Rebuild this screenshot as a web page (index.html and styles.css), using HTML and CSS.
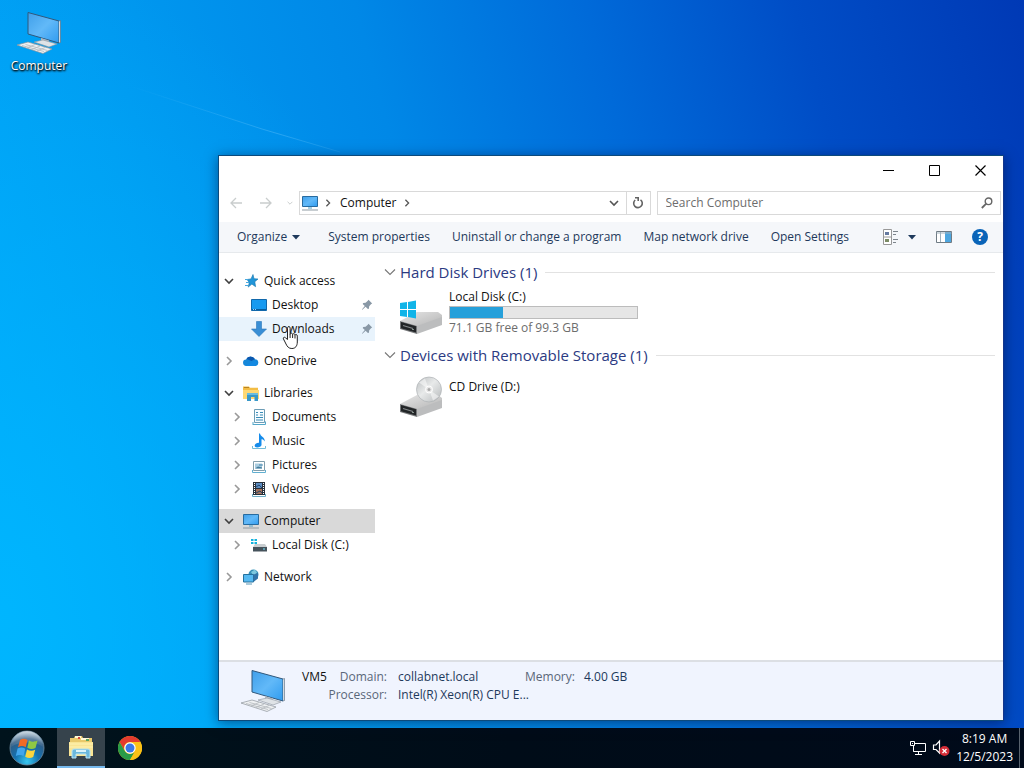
FILE: index.html
```
<!DOCTYPE html>
<html lang="en">
<head>
<meta charset="utf-8">
<meta name="viewport" content="width=device-width, initial-scale=1">
<title>Computer</title>
<link rel="stylesheet" href="styles.css">
</head>
<body>
<svg class="defs" aria-hidden="true">
  <defs>
    <linearGradient id="screen" x1="0" y1="0" x2="1" y2="1"><stop offset="0" stop-color="#3f9fea"/><stop offset=".5" stop-color="#62b9f8"/><stop offset="1" stop-color="#2f9bf0"/></linearGradient>
    <linearGradient id="metal" x1="0" y1="0" x2="1" y2="1"><stop offset="0" stop-color="#e6e6e6"/><stop offset="1" stop-color="#b4b4b4"/></linearGradient>
    <linearGradient id="disc" x1="0" y1="0" x2="1" y2="1"><stop offset="0" stop-color="#b9bcbe"/><stop offset=".45" stop-color="#e8eaea"/><stop offset="1" stop-color="#b5b8ba"/></linearGradient>
    <radialGradient id="orb" cx=".5" cy=".9" r=".9"><stop offset="0" stop-color="#39c8f0"/><stop offset=".4" stop-color="#1471b0"/><stop offset=".75" stop-color="#315c83"/><stop offset="1" stop-color="#b5cad8"/></radialGradient>
    <linearGradient id="shine" x1="0" y1="0" x2="0" y2="1"><stop offset="0" stop-color="#fff" stop-opacity=".8"/><stop offset="1" stop-color="#fff" stop-opacity=".1"/></linearGradient>
    <linearGradient id="ray" x1="0" y1="0" x2="1" y2="0"><stop offset="0" stop-color="#8ad4ff" stop-opacity="0"/><stop offset=".7" stop-color="#8ad4ff" stop-opacity=".3"/><stop offset="1" stop-color="#8ad4ff" stop-opacity=".12"/></linearGradient>
    <symbol id="pc-big" viewBox="0 0 46 46">
      <path d="M12 1.500 43 10v22L12 23Z" fill="url(#screen)" stroke="#31587c" stroke-width="1"/>
      <path d="M43 10l1.500-.5v22L43 32" fill="#d3d9df" stroke="#54697d" stroke-width=".6"/>
      <path d="M25 27v4l8 3v-4.500Z" fill="#b6bdc5"/>
      <path d="m18 31 9-2 14 4-8 3Z" fill="#dfe3e7" stroke="#8b949c" stroke-width=".6"/>
      <path d="m1 34 11-3 24 7-9 4.500Z" fill="#eef0f2" stroke="#8c949b" stroke-width=".7"/>
      <path d="m6 34.500 22 6M9.500 33.500l22 6M11 37l8-3.500M16 38.500l8-3.500M21 40l8-3.500" stroke="#b3b8bd" stroke-width=".8" fill="none"/>
    </symbol>
    <symbol id="pc" viewBox="0 0 16 16">
      <path d="M.5 1.500h15v10H.5z" fill="url(#screen)" stroke="#286b9f"/>
      <path d="M6 13h4" stroke="#4ea1c7"/><path d="M0 15h16" stroke="#8f9ba4"/>
    </symbol>
    <symbol id="down" viewBox="0 0 10 10"><path d="m1 3 4 4 4-4" fill="none" stroke="currentColor" stroke-width="1.600"/></symbol>
    <symbol id="down-thin" viewBox="0 0 12 12"><path d="m1 3.500 5 5 5-5" fill="none" stroke="currentColor" stroke-width="1.100"/></symbol>
    <symbol id="right" viewBox="0 0 10 10"><path d="m3 1 4 4-4 4" fill="none" stroke="currentColor" stroke-width="1.600"/></symbol>
    <symbol id="fill-down" viewBox="0 0 8 5"><path d="M0 0h8L4 4.500z" fill="currentColor"/></symbol>
    <symbol id="arrow-left" viewBox="0 0 12 12"><path d="M12 6H1M6 1 1 6l5 5" fill="none" stroke="currentColor" stroke-width="1.300"/></symbol>
    <symbol id="arrow-right" viewBox="0 0 12 12"><path d="M0 6h11M6 1l5 5-5 5" fill="none" stroke="currentColor" stroke-width="1.300"/></symbol>
    <symbol id="pin" viewBox="0 0 12 12"><path d="m7.500.8 3.700 3.700-1 .6-2 2.200-.3 2.400-1 .4-2.300-2.300-3.500 3.300.2-1 2.500-3.100L1.700 5l.5-.9 2.400-.4 2.200-2z" fill="#8998a6"/></symbol>
    <symbol id="star" viewBox="0 0 16 16"><path d="m10 1.500 1 4.200 4 .3-3.200 2.700.8 5-3.700-2.600-3.700 3 1.100-4.600L4 6.500l4-.6z" fill="#2095d8" stroke="#1374ad" stroke-width=".6"/><path d="M2 6.500h3M3 9.500h3M2 12.500h3" stroke="#49a9df"/></symbol>
    <symbol id="desk" viewBox="0 0 16 16"><path d="M.5 2.500h15v11H.5z" fill="#189af0" stroke="#1168ab"/><path d="M1 12.500h14" stroke="#075d9e"/><path d="M2 12.500h1m1 0h1" stroke="#9cd5ff"/></symbol>
    <symbol id="download" viewBox="0 0 16 16"><path d="M5.500.5h5V8h5L8 15.500.5 8h5z" fill="#398ed5" stroke="#2876b8" stroke-width=".6"/></symbol>
    <symbol id="cloud" viewBox="0 0 16 16"><path d="M3.500 13a3.300 3.300 0 0 1-.3-6.600A5 5 0 0 1 12 6.300a3.400 3.400 0 0 1 .7 6.700z" fill="#1687d9"/><path d="M3 6.500A5 5 0 0 1 12 6L8.500 8 4.300 6.300z" fill="#0a57ae"/><path d="M2.500 12.800 12 7.600a3.400 3.400 0 0 1 .7 5.400H3.500z" fill="#1389e3"/></symbol>
    <symbol id="folder" viewBox="0 0 16 16"><path d="M0 1.500h6l1 1.300h8v11H0z" fill="#f3bd45"/><path d="M0 5h16v9H0z" fill="#ffd873"/><path d="M1 2.500h5" stroke="#b98325"/><path d="M4 8h11v8h-3.500v-4H8v4H4z" fill="#3998c8"/><path d="M4 8h11v2H4z" fill="#69bce0"/></symbol>
    <symbol id="doc" viewBox="0 0 16 16"><path d="M3.500.5h10v13h-10z" fill="#f7fcff" stroke="#6d9db6"/><path d="M5 3.500h2M9 3.500h3M5 6h2m2 0h3M5 8.500h7M5 11h7" stroke="#388bb6"/><path d="M1.500 15.500h13v-3" fill="none" stroke="#53a7c9"/><path d="M2 13v2" stroke="#53a7c9"/></symbol>
    <symbol id="music" viewBox="0 0 16 16"><path d="M9 .5c.4 3 5 3.500 4.800 8-1-1.600-2.200-2.200-3.300-2.200v5.700c0 2.400-6.800 3.800-6.800.8C3.700 10.400 6.500 9.600 8 9.800V.5z" fill="#168ceb"/><path d="M1.500 13v2.500h13V13" fill="none" stroke="#73bcd8"/></symbol>
    <symbol id="pic" viewBox="0 0 16 16"><path d="M2.500 4.500h11v9h-11z" fill="#fff" stroke="#819eac"/><path d="M4 6.500h7v5H4z" fill="#a9ccdf"/><path d="m4 11.500 3-2 4 1v1z" fill="#417b9c"/><path d="M8 8h4" stroke="#4686ad"/><path d="M1.500 13v2.500h13V13" fill="none" stroke="#62afd0"/></symbol>
    <symbol id="video" viewBox="0 0 16 16"><path d="M2 1h12v13H2z" fill="#27313b"/><path d="M5 2h6v5H5z" fill="#5b8bc0"/><path d="M5 8h6v5H5z" fill="#a3715b"/><path d="m5 6 3-2 3 3M5 12l4-2 2 2" stroke="#24486c" fill="none"/><path d="M3.500 2v11M12.500 2v11" stroke="#fff" stroke-width="1" stroke-dasharray="1 1"/><path d="M1.500 13v2.500h13V13" fill="none" stroke="#6cadc5"/></symbol>
    <symbol id="disk" viewBox="0 0 16 16"><path d="M0 2h2.500v2H0zm3.500 0H6v2H3.500zM0 5h2.500v2H0zm3.500 0H6v2H3.500z" fill="#14b3dd"/><path d="m2 10 2-3h10l2 3z" fill="#c9ced1"/><path d="M2 10h14v4.500H2z" fill="#46535c"/><path d="M12 12h2" stroke="#75e8ff"/></symbol>
    <symbol id="net" viewBox="0 0 16 16"><circle cx="10.500" cy="5.500" r="5" fill="#358fb6"/><path d="m8 3 4-2.500 2 3-3 4" fill="#7dc8df"/><path d="M.5 5.500h10v7.500H.5z" fill="#56b9f1" stroke="#25719d"/><path d="M10.500 5.500 15 4v5.500L10.500 13" fill="#3273a8"/><path d="M3 15h6" stroke="#5896b5"/></symbol>
    <symbol id="drive-body" viewBox="0 0 42 22"><path d="M0 9 17 0h21l4 3v3L17 15z" fill="url(#metal)"/><path d="m0 9 17 5v8L0 17z" fill="#77797b"/><path d="m17 14 25-9v8l-25 9z" fill="#bcbdbe"/><path d="m1 10 15 4.300v6.200L1 16.300z" fill="#222527"/><path d="m3 13.500 10 3" stroke="#85898b" stroke-width="1.300"/><path d="M13 17v1" stroke="#e7fff0"/></symbol>
  </defs>
</svg>

<main class="desktop">
  <svg class="streak" viewBox="0 0 1024 728" preserveAspectRatio="none" aria-hidden="true"><path d="M130 86 262 129 340 152" fill="none" stroke="url(#ray)"/></svg>
  <button class="shortcut" type="button"><svg class="i46"><use href="#pc-big"/></svg><span>Computer</span></button>

  <section class="window" aria-label="Computer">
    <header class="titlebar">
      <button type="button" aria-label="Minimize"><svg class="i11" viewBox="0 0 11 11"><path d="M0 5.500h11" stroke="#000"/></svg></button>
      <button type="button" aria-label="Maximize"><svg class="i11" viewBox="0 0 11 11"><path d="M.5.5h10v10H.5z" fill="none" stroke="#000"/></svg></button>
      <button type="button" aria-label="Close"><svg class="i11" viewBox="0 0 11 11"><path d="m.5.5 10 10m0-10-10 10" stroke="#000" stroke-width="1.200"/></svg></button>
    </header>

    <div class="navbar">
      <div class="history">
        <button type="button" aria-label="Back"><svg class="i12"><use href="#arrow-left"/></svg></button>
        <button type="button" aria-label="Forward"><svg class="i12"><use href="#arrow-right"/></svg></button>
        <button type="button" aria-label="Recent locations"><svg class="i6"><use href="#down"/></svg></button>
      </div>
      <div class="address">
        <svg class="i16"><use href="#pc"/></svg>
        <svg class="i8"><use href="#right"/></svg>
        <a href="#computer">Computer</a>
        <svg class="i8"><use href="#right"/></svg>
        <button class="address-drop" type="button" aria-label="Previous locations"><svg class="i10"><use href="#down"/></svg></button>
        <button class="refresh" type="button" aria-label="Refresh"><svg class="i12" viewBox="0 0 12 12"><path d="M8.500 2.800A4.300 4.300 0 1 1 3.200 3M3 .8h3.200V4" fill="none" stroke="#636363" stroke-width="1.600"/></svg></button>
      </div>
      <label class="search"><input type="text" placeholder="Search Computer" aria-label="Search Computer"><svg class="i12" viewBox="0 0 12 12"><circle cx="7.500" cy="4.300" r="3.300" fill="none" stroke="#666" stroke-width="1.400"/><path d="M5 6.800.8 11" stroke="#666" stroke-width="1.800"/></svg></label>
    </div>

    <div class="toolbar">
      <button type="button">Organize <svg class="caret"><use href="#fill-down"/></svg></button>
      <button type="button">System properties</button>
      <button type="button">Uninstall or change a program</button>
      <button type="button">Map network drive</button>
      <button type="button">Open Settings</button>
      <div class="tools">
        <button type="button" aria-label="Change view"><svg class="i16" viewBox="0 0 16 16"><path d="M1.500.5h8v15h-8zM1.500 8h8" fill="#fff" stroke="#989898"/><path d="M3 3h4v3H3z" fill="#667aa0"/><path d="M3 10h4v3H3z" fill="#7b8b65"/><path d="M11 2.500h5M11 5.500h3M11 10.500h5M11 13.500h3" stroke="#7d858c"/></svg><svg class="caret"><use href="#fill-down"/></svg></button>
        <button type="button" aria-label="Preview pane"><svg class="i16" viewBox="0 0 16 16"><path d="M.5 2.500h15v11H.5z" fill="#fff" stroke="#6f7b84"/><path d="M9 3h6v10H9z" fill="#4da6df"/><path d="M4.500 3v10M.5 4h15" stroke="#9fb1bd"/></svg></button>
        <button type="button" aria-label="Help"><span class="help">?</span></button>
      </div>
    </div>

    <div class="body">
      <nav class="tree" aria-label="Folders">
        <div class="branch">
          <a href="#quick"><svg class="i10 open"><use href="#down"/></svg><svg class="i16"><use href="#star"/></svg>Quick access</a>
          <a class="child" href="#desktop"><span class="i10"></span><svg class="i16"><use href="#desk"/></svg>Desktop<svg class="i12 pin"><use href="#pin"/></svg></a>
          <a class="child hover" href="#downloads"><span class="i10"></span><svg class="i16"><use href="#download"/></svg>Downloads<svg class="i12 pin"><use href="#pin"/></svg></a>
        </div>
        <div class="branch">
          <a href="#onedrive"><svg class="i10"><use href="#right"/></svg><svg class="i16"><use href="#cloud"/></svg>OneDrive</a>
        </div>
        <div class="branch">
          <a href="#libraries"><svg class="i10 open"><use href="#down"/></svg><svg class="i16"><use href="#folder"/></svg>Libraries</a>
          <a class="child" href="#documents"><svg class="i10"><use href="#right"/></svg><svg class="i16"><use href="#doc"/></svg>Documents</a>
          <a class="child" href="#music"><svg class="i10"><use href="#right"/></svg><svg class="i16"><use href="#music"/></svg>Music</a>
          <a class="child" href="#pictures"><svg class="i10"><use href="#right"/></svg><svg class="i16"><use href="#pic"/></svg>Pictures</a>
          <a class="child" href="#videos"><svg class="i10"><use href="#right"/></svg><svg class="i16"><use href="#video"/></svg>Videos</a>
        </div>
        <div class="branch">
          <a class="selected" href="#computer"><svg class="i10 open"><use href="#down"/></svg><svg class="i16"><use href="#pc"/></svg>Computer</a>
          <a class="child" href="#c"><svg class="i10"><use href="#right"/></svg><svg class="i16"><use href="#disk"/></svg>Local Disk (C:)</a>
        </div>
        <div class="branch">
          <a href="#network"><svg class="i10"><use href="#right"/></svg><svg class="i16"><use href="#net"/></svg>Network</a>
        </div>
      </nav>

      <div class="content">
        <h2><svg class="i12"><use href="#down-thin"/></svg>Hard Disk Drives (1)</h2>
        <a class="drive" href="#c">
          <svg class="drive-icon" viewBox="0 0 44 44"><use href="#drive-body" x="1" y="18" width="42" height="24"/><path d="m1 10 7-1v7H1zm8-1 8-1.500V16H9zM1 17h7v7l-7-1zm8 0h8v8.500L9 24z" fill="#10b4e8"/></svg>
          <span class="drive-text"><span>Local Disk (C:)</span><meter min="0" max="99.3" value="28.2" aria-label="Space used"></meter><span class="muted">71.1 GB free of 99.3 GB</span></span>
        </a>
        <h2><svg class="i12"><use href="#down-thin"/></svg>Devices with Removable Storage (1)</h2>
        <a class="drive" href="#d">
          <svg class="drive-icon" viewBox="0 0 44 44"><use href="#drive-body" x="1" y="18" width="42" height="24"/><circle cx="30" cy="13.500" r="12.500" fill="url(#disc)" stroke="#aeb2b4" stroke-width=".7"/><path d="m30 13.500-10-7 6-4zm0 0 10 7-6 4z" fill="#fff" fill-opacity=".5"/><circle cx="30" cy="13.500" r="3.500" fill="#e8e8e8" stroke="#fff"/><circle cx="30" cy="13.500" r="1.500" fill="#aaa"/></svg>
          <span class="drive-text"><span>CD Drive (D:)</span></span>
        </a>
      </div>
    </div>

    <footer class="details">
      <svg class="i46"><use href="#pc-big"/></svg>
      <dl class="facts">
        <dt class="name">VM5</dt><dt>Domain:</dt><dd>collabnet.local</dd><dt>Memory:</dt><dd>4.00 GB</dd>
        <dt class="second">Processor:</dt><dd>Intel(R) Xeon(R) CPU E...</dd>
      </dl>
    </footer>
  </section>

  <svg class="pointer" viewBox="0 0 18 24" aria-hidden="true"><path d="M5.500 13.500V2.200c0-2 2.600-2 2.600 0v6c.2-1.500 2.500-1.300 2.500.3.300-1.300 2.400-1 2.400.6.500-1.100 2.300-.8 2.300 1V16c0 4-1.900 6.500-5.400 6.500-3.300 0-4.600-1.900-5.900-4.500L1.500 13c-.8-1.600 1.100-2.400 2.200-1z" fill="#fff" stroke="#222" stroke-width="1"/><path d="M8.100 8v4m2.500-3.500V12M13 9v3.500" stroke="#222"/></svg>
</main>

<footer class="taskbar">
  <button class="start" type="button" aria-label="Start"><svg class="orb" viewBox="0 0 36 36"><circle cx="18" cy="18" r="17" fill="url(#orb)" stroke="#6e8ea4" stroke-width=".8"/><path d="M2 17A16 16 0 0 1 34 17C27 11 10 11 2 17z" fill="url(#shine)" opacity=".5"/><path d="M11 10c3-2 5-1.500 7.500 0l-1.800 7.200c-2.400-1.500-4.700-1.700-7.700 0z" fill="#f06a27"/><path d="M20 10.500c3 1.600 5 1.600 8.500 0l-2 7.500c-3 1.600-5.300 1.300-8.200-.2z" fill="#8fc843"/><path d="M8.600 18.500c3-1.500 5.300-1.300 7.700.2L14.500 26c-2.500-1.500-5-1.500-7.700 0z" fill="#42a6ed"/><path d="M18 19.500c2.700 1.500 5.300 1.600 8.200.2l-2 7.300c-2.800 1.500-5.300 1.300-8-.3z" fill="#fbd53e"/></svg></button>
  <button class="app active" type="button" aria-label="File Explorer"><svg class="i26" viewBox="0 0 26 26"><path d="M2 4h4l1-2h7l1 2h9v18H2z" fill="#e9c96b"/><path d="M7 3h6M13 5h8" stroke="#fff8d8" stroke-width="2"/><path d="M10 4h2" stroke="#d1493d" stroke-width="2"/><path d="M18 6h3" stroke="#5ba55d" stroke-width="2"/><path d="M1 8h24v14H1z" fill="#f9e594"/><path d="M1 10h24M1 13h24" stroke="#fff2b3"/><path d="M4 24v-7q0-2 2-2h14q2 0 2 2v7h-4v-4H8v4z" fill="#6bb8dc" stroke="#b9e4f3"/><path d="M8 17h10" stroke="#d9f3fb" stroke-width="2"/></svg></button>
  <button class="app" type="button" aria-label="Chrome"><svg class="i24" viewBox="0 0 24 24"><circle cx="12" cy="12" r="12" fill="#fbc116"/><path d="M1.600 6A12 12 0 0 1 22.400 6H12a6 6 0 0 0-5.200 9z" fill="#e33b2e"/><path d="M1.600 6A12 12 0 0 0 12 24l5.200-9a6 6 0 0 1-10.400 0z" fill="#299b48"/><path d="M22.400 6H12a6 6 0 0 1 5.200 9L12 24A12 12 0 0 0 22.400 6z" fill="#fbc116"/><circle cx="12" cy="12" r="5.700" fill="#fff"/><circle cx="12" cy="12" r="4.500" fill="#3b78e7"/></svg></button>
  <div class="tray">
    <button type="button" aria-label="Network"><svg class="i16" viewBox="0 0 16 16"><path d="M5 3.500h10.500v8H3.500V7M8.500 12v2.500M5 14.500h7" fill="none" stroke="#fff"/><path d="M.5 1.500h4v4h-4zM3.500 6v5.500" fill="none" stroke="#fff"/><path d="M2 3h1v1H2z" fill="#fff"/></svg></button>
    <button type="button" aria-label="Volume muted"><svg class="i18" viewBox="0 0 18 18"><path d="M1.500 6h2.500l3.500-4v12L4 10.500H1.500z" fill="none" stroke="#fff" stroke-width="1.200"/><circle cx="12.500" cy="12" r="5" fill="#d32c36"/><path d="m10.500 10 4 4m0-4-4 4" stroke="#fff" stroke-width="1.300"/></svg></button>
    <button class="clock" type="button"><span>8:19 AM</span><span>12/5/2023</span></button>
    <button class="peek" type="button" aria-label="Show desktop"></button>
  </div>
</footer>
</body>
</html>
```
FILE: styles.css
```
* { box-sizing: border-box; }
body {
  margin: 0;
  height: 100vh;
  display: flex;
  flex-direction: column;
  overflow: hidden;
  font: 12px/16px "Open Sans", "Noto Sans", sans-serif;
  color: #111;
}
button { font: inherit; color: inherit; background: none; border: 0; padding: 0; margin: 0; display: flex; align-items: center; justify-content: center; }
a { color: inherit; text-decoration: none; }
svg { flex: none; display: block; }
.defs { position: absolute; width: 0; height: 0; }
.i6 { width: 6px; height: 6px; }
.i8 { width: 8px; height: 8px; }
.i10 { width: 10px; height: 10px; }
.i11 { width: 11px; height: 11px; }
.i12 { width: 12px; height: 12px; }
.i16 { width: 16px; height: 16px; }
.i18 { width: 18px; height: 18px; }
.i24 { width: 24px; height: 24px; }
.i26 { width: 26px; height: 26px; }
.i46 { width: 46px; height: 46px; }
.caret { width: 8px; height: 5px; }

.desktop {
  flex: 1;
  min-height: 0;
  position: relative;
  padding: 11px 4px;
  background:
    radial-gradient(ellipse 46% 90% at 0% 85%, rgba(0, 184, 255, .85), rgba(0, 180, 255, 0)),
    linear-gradient(75deg, #00a8fb 0%, #009bf1 22%, #0088e7 45%, #006ad9 64%, #004dc6 81%, #0039b5 100%);
}
.streak { position: absolute; inset: 0; width: 100%; height: 100%; }
.shortcut { position: relative; width: 70px; flex-direction: column; gap: 1px; color: #fff; text-shadow: 1px 1px 2px #000, 0 1px 2px #000; }

.window {
  position: absolute;
  inset: 155px 20px 7px 218px;
  display: flex;
  flex-direction: column;
  background: #fff;
  border: 1px solid #0c4a7c;
  border-right-color: #12358c;
  box-shadow: 0 2px 12px rgba(0, 10, 50, .5);
}
.titlebar { display: flex; justify-content: flex-end; height: 29px; }
.titlebar button { width: 46px; }

.navbar { display: flex; padding: 6px 2px 7px 8px; height: 37px; }
.history { display: flex; width: 72px; color: #c9cdcd; }
.history button { flex: 1 1 auto; justify-content: flex-start; padding-left: 3px; }
.history button:last-child { flex: 0 0 12px; padding: 0; }
.address { flex: 347 1 0; display: flex; align-items: center; gap: 6px; border: 1px solid #d9d9d9; padding-left: 2px; color: #555; }
.address a { color: #111; padding-left: 2px; }
.address-drop { margin-left: auto; width: 18px; }
.refresh { align-self: stretch; width: 24px; margin-left: -3px; border-left: 1px solid #d9d9d9; }
.search { flex: 327 1 0; min-width: 0; display: flex; align-items: center; margin-left: 6px; padding: 0 7px 0 8px; border: 1px solid #d9d9d9; }
.search input { flex: 1; min-width: 0; border: 0; outline: 0; padding: 0; font: inherit; background: none; }
.search input::placeholder { color: #6d6d6d; opacity: 1; }

.toolbar { display: flex; align-items: center; gap: 22px; height: 31px; padding: 0 15px 0 18px; background: #f5f7fa; border-bottom: 1px solid #e6e9ec; color: #1e395b; white-space: nowrap; }
.toolbar > button { gap: 5px; }
.toolbar > button:first-child { margin-right: 6px; }
.tools { display: flex; align-items: center; gap: 20px; margin-left: auto; }
.tools button { gap: 10px; }
.help { width: 16px; height: 16px; border-radius: 50%; background: #0a64b8; color: #fff; font-weight: 700; line-height: 16px; text-align: center; }

.body { flex: 1; min-height: 0; display: flex; }
.tree { width: 156px; display: flex; flex-direction: column; gap: 8px; padding-top: 16px; }
.branch a { display: flex; align-items: center; height: 24px; padding-left: 5px; white-space: nowrap; color: #111; }
.branch a.child { padding-left: 13px; }
.branch .i10 { color: #999; margin-right: 9px; }
.branch .i10.open { color: #404040; }
.branch .i16 { margin-right: 5px; }
.branch .pin { margin-left: auto; margin-right: 2px; }
.branch a.hover { background: #e8f3fc; }
.branch a.selected { background: #d9d9d9; }

.content { flex: 1; min-width: 0; padding: 8px 8px 0 9px; }
.content h2 { display: flex; align-items: center; gap: 4px; margin: 0; height: 22px; font-size: 15px; font-weight: 400; color: #2b3a82; }
.content h2::after { content: ""; flex: 1; height: 1px; margin-left: 4px; background: #e2e2e2; }
.content h2 svg { color: #777; }
.drive { display: flex; gap: 6px; padding-left: 15px; height: 61px; }
.drive-icon { width: 44px; height: 44px; margin-top: 10px; }
.drive-text { display: flex; flex-direction: column; padding-top: 6px; }
.drive:last-child .drive-text { padding-top: 13px; }
.muted { color: #6d6d6d; }
meter { display: block; width: 189px; height: 13px; margin: 1px 0; appearance: none; background: #e6e6e6; }
meter::-webkit-meter-inner-element { display: block; position: static; height: 100%; }
meter::-webkit-meter-bar { display: block; position: static; inset: auto; margin: 0; transform: none; height: 13px; border: 1px solid #bcbcbc; border-radius: 0; background: #e6e6e6; }
meter::-webkit-meter-optimum-value { display: block; height: 100%; background: #26a0da; }

.details { display: flex; height: 60px; padding: 7px 0 0 21px; gap: 16px; background: #f0f4fe; border-top: 2px solid #dcdfe4; }
.facts { display: grid; grid-template-columns: 27px 58px 138px 48px auto; row-gap: 2px; align-content: start; margin: 0; white-space: nowrap; }
.facts dt { color: #5a6779; text-align: right; }
.facts dt.name { color: #111; text-align: left; }
.facts .second { grid-column: 1 / 3; }
.facts dd { margin: 0; padding-left: 11px; color: #1e395b; }

.pointer { position: absolute; left: 282px; top: 326px; width: 18px; height: 24px; }

.taskbar { display: flex; height: 40px; background: linear-gradient(90deg, #00131c, #000c18 50%, #000a1a); color: #fff; }
.start { width: 57px; padding-right: 3px; }
.orb { width: 36px; height: 36px; }
.app { width: 48px; margin-right: 1px; }
.app.active { background: #36434c; border-bottom: 2px solid #76b9ed; }
.tray { display: flex; align-items: stretch; margin-left: auto; gap: 6px; }
.clock { flex-direction: column; gap: 2px; }
.peek { width: 5px; border-left: 1px solid #59636e; }
```
